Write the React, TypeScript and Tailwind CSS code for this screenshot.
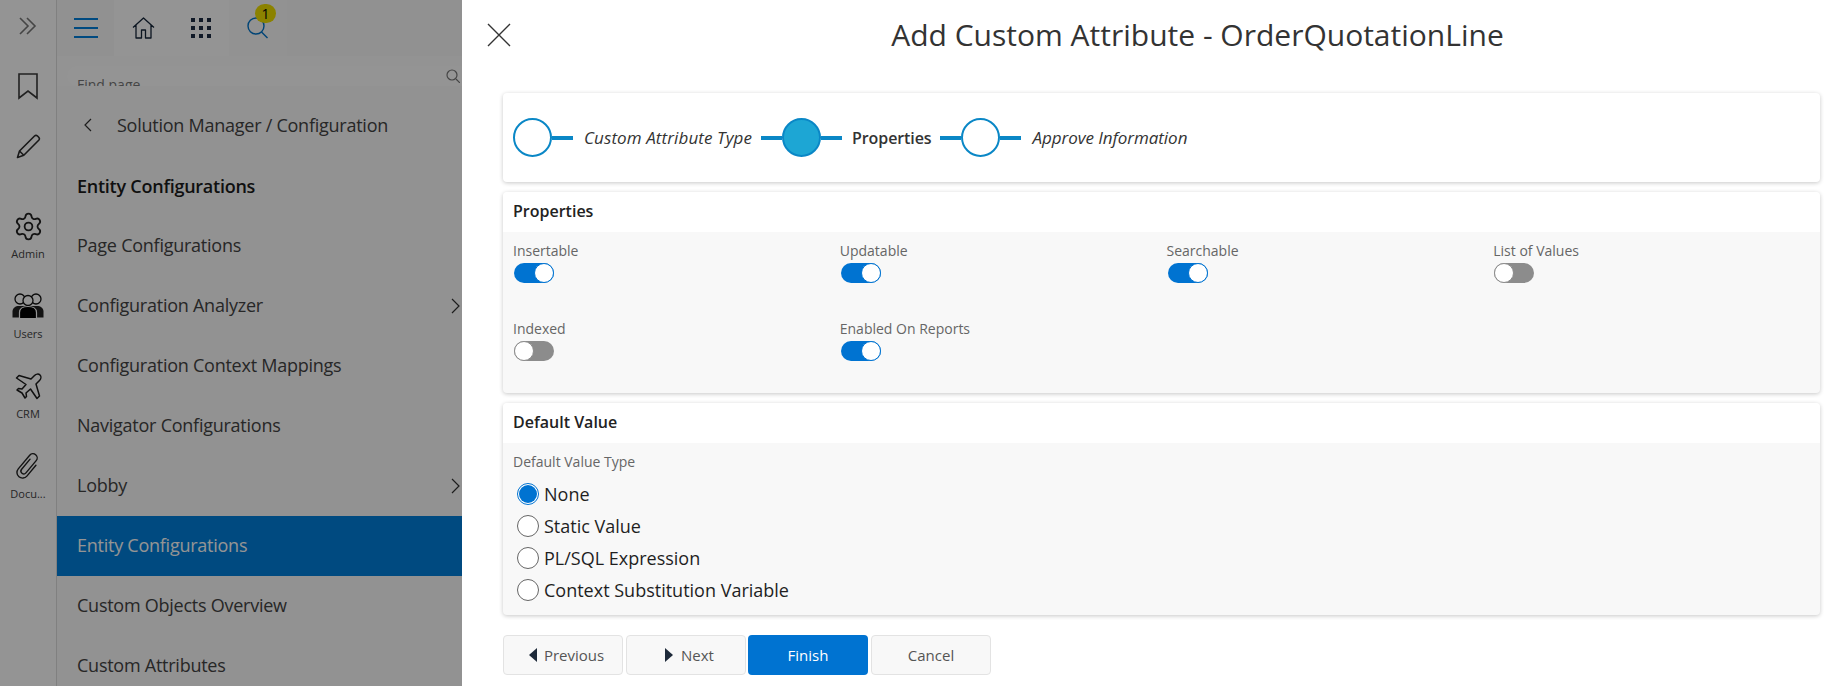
import React from "react";
import { Settings } from "lucide-react";

const menu = ["Page Configurations", "Configuration Analyzer", "Configuration Context Mappings", "Navigator Configurations", "Lobby", "Entity Configurations", "Custom Objects Overview", "Custom Attributes"];

function Chevron() {
  return (
    <svg width="9" height="16" viewBox="0 0 9 16" fill="none" stroke="#333" strokeWidth="1.2"><path d="M1 1l7 7-7 7" /></svg>
  );
}

function RailItem({ label, icon }: { label: string; icon: React.ReactNode }) {
  return (
    <div className="h-[80px] shrink-0 pt-[6px] flex flex-col items-center">
      <div className="h-[28px] flex items-center justify-center">{icon}</div>
      <div className="mt-[6px] h-[16px] w-[50px] text-center text-[11px] leading-[16px] text-[#444] truncate">{label}</div>
    </div>
  );
}

function Toggle({ label, on }: { label: string; on: boolean }) {
  return (
    <div className="h-[78px]">
      <div className="h-[20px] text-[14px] leading-[20px] text-[#666]">{label}</div>
      <div className={on
        ? "mt-[2px] w-[40px] h-[20px] ml-px rounded-full bg-[#0073d1] flex justify-end"
        : "mt-[2px] w-[40px] h-[20px] ml-px rounded-full bg-[#8c8c8c] flex justify-start"}>
        <div className={on
          ? "w-[20px] h-[20px] rounded-full bg-white border border-[#0073d1]"
          : "w-[20px] h-[20px] rounded-full bg-white border border-[#8c8c8c]"} />
      </div>
    </div>
  );
}

function Radio({ label, on }: { label: string; on?: boolean }) {
  return (
    <div className="h-[32px] flex items-center">
      <div className={on
        ? "ml-[4px] w-[22px] h-[22px] rounded-full border border-[#0073d1] bg-white flex items-center justify-center"
        : "ml-[4px] w-[22px] h-[22px] rounded-full border border-[#666] bg-white"}>
        {on ? <div className="w-[18px] h-[18px] rounded-full bg-[#0073d1]" /> : null}
      </div>
      <span className="ml-[5px] text-[18px] leading-[22px] text-[#1f1f1f]">{label}</span>
    </div>
  );
}

function Step({ label, text, active, lead }: { label: string; text: string; active?: boolean; lead?: boolean }) {
  return (
    <div className="flex items-center">
      {lead ? <div className="w-[21px] h-[4px] bg-[#0a87c6]" /> : null}
      <div className="w-[39px] h-[39px] rounded-full border-2 border-[#0a87c6]" style={{ backgroundColor: active ? "#1da6d4" : "#fff" }} />
      <div className="w-[21px] h-[4px] bg-[#0a87c6]" />
      <span className={text}>{label}</span>
    </div>
  );
}

function Btn({ children, primary, extra }: { children: React.ReactNode; primary?: boolean; extra?: string }) {
  return (
    <div className={(primary
      ? "w-[120px] h-[40px] rounded-[4px] bg-[#0073d1] text-white text-[15px] flex items-center justify-center "
      : "w-[120px] h-[40px] rounded-[4px] bg-[#f8f8f8] border border-[#e3e3e3] text-[#555] text-[15px] flex items-center justify-center ") + (extra ?? "")}>
      {children}
    </div>
  );
}

export default function App() {
  return (
    <div className="relative w-[1829px] h-[686px] overflow-hidden flex bg-white font-['Open_Sans',sans-serif]">
      <div className="relative w-[462px] shrink-0 flex bg-white">
        <div className="w-[57px] shrink-0 border-r border-[#dcdcdc] flex flex-col">
          <div className="h-[56px] shrink-0 pb-[4px] flex items-center justify-center">
            <svg width="18" height="18" viewBox="0 0 18 18" fill="none" stroke="#777" strokeWidth="1.6"><path d="M1 1l8 8-8 8M8 1l8 8-8 8" /></svg>
          </div>
          <div className="h-[60px] shrink-0 flex items-center justify-center">
            <svg width="20" height="27" viewBox="0 0 20 27" fill="none" stroke="#3a3a3a" strokeWidth="1.6"><path d="M1 1h18v24l-9-7-9 7z" /></svg>
          </div>
          <div className="h-[60px] shrink-0 flex items-center justify-center">
            <svg width="25" height="25" viewBox="0 0 25 25" fill="none" stroke="#2c2c2c" strokeWidth="1.6" strokeLinejoin="round"><path d="M1.5 23.5l2-6.5L18.5 2a2.2 2.2 0 013 0l1.2 1.2a2.2 2.2 0 010 3L7.8 21.3z" /><path d="M3.5 17l4.300 4.300" /></svg>
          </div>
          <div className="h-[30px] shrink-0" />
          <RailItem label="Admin" icon={<Settings size={31} strokeWidth={1.4} color="#222" />} />
          <RailItem label="Users" icon={
            <svg width="32" height="26" viewBox="0 0 32 26">
              <path d="M0.500 24.500v-6c0-3.500 3-5.500 6.500-5.500h18c3.500 0 6.500 2 6.500 5.500v6z" fill="#222" />
              <circle cx="8" cy="6" r="5" fill="#fff" stroke="#111" strokeWidth="1.300" />
              <circle cx="24" cy="6" r="5" fill="#fff" stroke="#111" strokeWidth="1.300" />
              <circle cx="16" cy="7.500" r="5" fill="#fff" stroke="#111" strokeWidth="1.300" />
              <path d="M7.500 25.500v-6c0-4 3.500-6 8.500-6s8.500 2 8.500 6v6z" fill="#000" stroke="#fff" strokeWidth="1.200" />
            </svg>
          } />
          <RailItem label="CRM" icon={
            <svg width="27" height="27" viewBox="0 0 27 27" fill="none" stroke="#1c1c1c" strokeWidth="1.500" strokeLinejoin="round">
              <path d="M25 2c-1.500-1.500-4-1-5.500.5L16 6 4 2.500 1.500 5l9.500 6.500-4 4.500-3.500-.5L2 17l5 3 3 5 1.500-1.500-.5-3.500 4.500-4L22 25.500l2.500-2.500-3.500-12 3.500-3.500C26 6 26.500 3.500 25 2z" />
            </svg>
          } />
          <RailItem label="Docu..." icon={
            <svg width="28" height="30" viewBox="-2 -1 28 32" fill="none" stroke="#222" strokeWidth="1.500" strokeLinecap="round">
              <g transform="rotate(40 12 15)"><path d="M9 8v14a3 3 0 006 0V5a4.500 4.500 0 00-9 0v19a6 6 0 0012 0V9" /></g>
            </svg>
          } />
        </div>
        <div className="flex-1 min-w-0 flex flex-col bg-[#fdfdfd]">
          <div className="h-[56px] shrink-0 flex bg-[#fafafa]">
            <div className="w-[57px] flex items-center justify-center">
              <div className="w-[24px] h-[20px] flex flex-col justify-between">
                <div className="h-[2px] bg-[#0080dc]" />
                <div className="h-[2px] bg-[#0080dc]" />
                <div className="h-[2px] bg-[#0080dc]" />
              </div>
            </div>
            <div className="w-[115px] flex bg-[#ffffff]">
              <div className="w-[58px] flex items-center justify-center">
                <svg width="23" height="22" viewBox="0 0 23 22" fill="none" stroke="#16263a" strokeWidth="1.300" strokeLinejoin="round"><path d="M1 10.500L11.500 1 22 10.500M4 8v13h5.500v-8h4v8H19V8" /></svg>
              </div>
              <div className="w-[57px] flex items-center justify-center">
                <div className="grid grid-cols-3 gap-[4px]">
                  {[0, 1, 2, 3, 4, 5, 6, 7, 8].map((i) => <div key={i} className="w-[4px] h-[4px] bg-[#1c2c44]" />)}
                </div>
              </div>
            </div>
            <div className="relative w-[58px] flex items-center justify-center bg-[#fbfbfb]">
              <svg width="22" height="22" viewBox="0 0 22 22" fill="none" stroke="#0076cc" strokeWidth="1.400"><circle cx="9" cy="9" r="8" /><path d="M14.500 15l6 6" /></svg>
              <div className="absolute left-[26px] top-[4px] w-[21px] h-[19px] rounded-full bg-[#f0e000] text-[14px] leading-[19px] text-center font-medium text-black">1</div>
            </div>
          </div>
          <div className="mt-[10px] shrink-0 ml-[10px] h-[20px] overflow-hidden rounded-l-[10px] bg-[#ffffff] flex pl-[10px] pr-[2px] justify-between">
            <span className="text-[14px] leading-[20px] pt-[9px] text-[#777]">Find page</span>
            <svg className="mt-[3px]" width="14" height="14" viewBox="0 0 14 14" fill="none" stroke="#777" strokeWidth="1.200"><circle cx="6" cy="6" r="5" /><path d="M10 10l4 4" /></svg>
          </div>
          <div className="h-[78px] shrink-0 flex items-center pl-[27px] bg-[#fbfbfb]">
            <svg width="8" height="14" viewBox="0 0 8 14" fill="none" stroke="#333" strokeWidth="1.200"><path d="M7 1L1 7l6 6" /></svg>
            <span className="ml-[25px] text-[18px] tracking-[-0.25px] text-[#444]">Solution Manager / Configuration</span>
          </div>
          <div className="h-[44px] shrink-0 flex items-center pl-[20px] text-[18px] tracking-[-0.25px] font-semibold text-[#1c1c1c] bg-[#fbfbfb]">Entity Configurations</div>
          <div className="pt-[8px] flex-1 flex flex-col bg-[#fbfbfb]">
            {menu.map((m, i) => (
              <div key={m} className={i === 5
                ? "h-[60px] shrink-0 flex items-center justify-between pl-[20px] pr-[2px] pb-[1px] text-[18px] tracking-[-0.25px] bg-[#0080dc] text-white"
                : "h-[60px] shrink-0 flex items-center justify-between pl-[20px] pr-[2px] pb-[1px] text-[18px] tracking-[-0.25px] text-[#444]"}>
                <span>{m}</span>
                {i === 1 || i === 4 ? <Chevron /> : null}
              </div>
            ))}
          </div>
        </div>
        <div className="absolute inset-0 bg-black/[0.42]" />
      </div>

      <div className="flex-1 min-w-0 flex flex-col pr-[9px]">
        <div className="h-[93px] shrink-0 flex">
          <div className="w-[113px] shrink-0 h-[70px] pl-[25px] flex items-center">
            <svg width="24" height="24" viewBox="0 0 24 24" fill="none" stroke="#333" strokeWidth="1.400"><path d="M1 1l22 22M23 1L1 23" /></svg>
          </div>
          <div className="flex-1 h-[68px] flex items-center justify-center text-[30px] text-[#333]">Add Custom Attribute - OrderQuotationLine</div>
        </div>
        <div className="ml-[41px] shrink-0 flex flex-col gap-[10px]">
          <div className="h-[89px] rounded-[4px] bg-white shadow-[0_1px_4px_rgba(0,0,0,0.22)] pl-[10px] flex items-center gap-[9px]">
            <Step label="Custom Attribute Type" text="ml-[11px] text-[17px] tracking-[0.1px] italic text-[#333]" />
            <Step label="Properties" active lead text="ml-[10px] text-[16px] tracking-[-0.1px] font-semibold text-[#333]" />
            <Step label="Approve Information" lead text="ml-[11px] text-[17px] tracking-[-0.05px] italic text-[#333]" />
          </div>
          <div className="h-[201px] rounded-[4px] overflow-hidden bg-[#f8f8f8] shadow-[0_1px_4px_rgba(0,0,0,0.22)]">
            <div className="h-[40px] bg-white pl-[10px] pb-[2px] flex items-center text-[16px] font-semibold text-[#222]">Properties</div>
            <div className="pl-[10px] pt-[9px] grid grid-cols-4">
              <Toggle label="Insertable" on />
              <Toggle label="Updatable" on />
              <Toggle label="Searchable" on />
              <Toggle label="List of Values" on={false} />
              <Toggle label="Indexed" on={false} />
              <Toggle label="Enabled On Reports" on />
            </div>
          </div>
          <div className="h-[212px] rounded-[4px] overflow-hidden bg-[#f8f8f8] shadow-[0_1px_4px_rgba(0,0,0,0.22)]">
            <div className="h-[40px] bg-white pl-[10px] pb-[2px] flex items-center text-[16px] font-semibold text-[#222]">Default Value</div>
            <div className="pl-[10px] pt-[9px]">
              <div className="h-[20px] text-[14px] leading-[20px] text-[#666] mb-[14px]">Default Value Type</div>
              <div className="-mt-[8px]">
                <Radio label="None" on />
                <Radio label="Static Value" />
                <Radio label="PL/SQL Expression" />
                <Radio label="Context Substitution Variable" />
              </div>
            </div>
          </div>
        </div>
        <div className="ml-[41px] mt-[20px] flex gap-[3px]">
          <Btn extra="pl-[7px]">
            <svg width="8" height="14" viewBox="0 0 8 14" fill="#1e2a3a"><path d="M8 0v14L0 7z" /></svg>
            <span className="ml-[7px]">Previous</span>
          </Btn>
          <Btn extra="pl-[7px]">
            <svg width="8" height="14" viewBox="0 0 8 14" fill="#1e2a3a"><path d="M0 0v14l8-7z" /></svg>
            <span className="ml-[8px]">Next</span>
          </Btn>
          <Btn primary extra="-ml-px">Finish</Btn>
          <Btn>Cancel</Btn>
        </div>
      </div>
    </div>
  );
}
